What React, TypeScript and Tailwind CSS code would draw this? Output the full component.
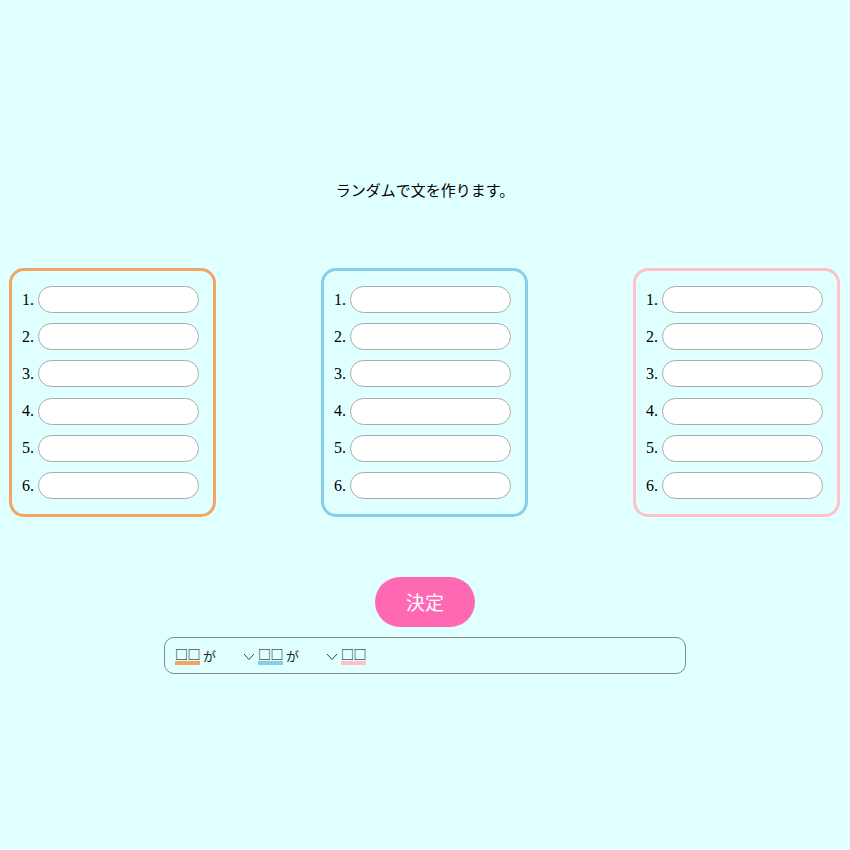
const COLUMNS = [
  { key: 'subject', border: 'border-[#f4a460]' },
  { key: 'object', border: 'border-[#87ceeb]' },
  { key: 'verb', border: 'border-[#ffc0cb]' },
];

const ROWS = [1, 2, 3, 4, 5, 6];

function Chevron() {
  return (
    <svg width="12" height="8" viewBox="0 0 12 8" className="mr-[3px] mt-[2px]">
      <polyline points="1,1 6,6.5 11,1" fill="none" stroke="#444" strokeWidth="1" />
    </svg>
  );
}

function WordBox({ color }: { color: string }) {
  return (
    <span className={`border-b-4 ${color} leading-[15px] tracking-[-0.5px] text-black`}>□□</span>
  );
}

export default function App() {
  return (
    <div className="min-h-[850px] w-[850px] bg-[#e0ffff] flex flex-col items-center pt-[178px] font-['Noto_Sans_CJK_JP',sans-serif] text-black">
      <p className="text-[15px] leading-6">ランダムで文を作ります。</p>

      <div className="w-full flex justify-between pl-[9px] pr-[10px] mt-[66px]">
        {COLUMNS.map((col) => (
          <div
            key={col.key}
            className={`w-[207px] border-[3px] ${col.border} rounded-[15px] pt-[15px] pb-[15px] pl-[10px] flex flex-col gap-[10px]`}
          >
            {ROWS.map((n) => (
              <div key={n} className="flex items-center h-[27.2px] font-['Liberation_Serif',serif] text-[16px]">
                <span className="w-[16px]">{n}.</span>
                <input
                  type="text"
                  className="w-[161px] h-[27px] bg-white border border-[#aaaaaa] rounded-full px-3 outline-none"
                />
              </div>
            ))}
          </div>
        ))}
      </div>

      <button className="mt-[60px] w-[100px] h-[50px] rounded-full bg-[#ff69b4] text-white text-[19px]">
        決定
      </button>

      <div className="mt-[10px] w-[522px] h-[37px] border border-[#888888] rounded-[10px] flex items-center pl-[10px] text-[13px] text-[#222]">
        <WordBox color="border-[#f4a460]" />
        <span className="ml-[3px]">が</span>
        <span className="ml-[27px] flex items-center">
          <Chevron />
          <WordBox color="border-[#87ceeb]" />
          <span className="ml-[3px]">が</span>
        </span>
        <span className="ml-[27px] flex items-center">
          <Chevron />
          <WordBox color="border-[#ffc0cb]" />
        </span>
      </div>
    </div>
  );
}
